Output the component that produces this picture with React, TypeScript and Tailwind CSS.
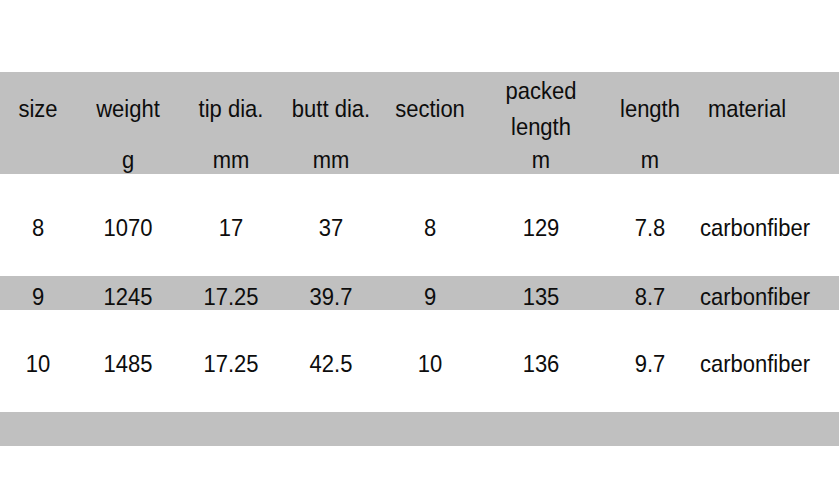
import React from 'react';

const cols = 'grid grid-cols-[76px_104px_102px_98px_100px_122px_96px_114px_1fr] *:scale-y-110';

const rows = [
  { size: '8', weight: '1070', tip: '17', butt: '37', section: '8', packed: '129', length: '7.8', material: 'carbonfiber', tall: true },
  { size: '9', weight: '1245', tip: '17.25', butt: '39.7', section: '9', packed: '135', length: '8.7', material: 'carbonfiber', tall: false },
  { size: '10', weight: '1485', tip: '17.25', butt: '42.5', section: '10', packed: '136', length: '9.7', material: 'carbonfiber', tall: true },
];

const SpecTable = () => {
  return (
    <div className="h-[486px] w-[839px] bg-white pt-[72px] text-[22px] text-[#0d0d0d] font-['Liberation_Sans',Arial,sans-serif]">
      {/* header */}
      <div className="bg-[#c0c0c0]">
        <div className={`${cols} h-[73px] items-center text-center leading-[33px]`}>
          <div>size</div>
          <div>weight</div>
          <div>tip dia.</div>
          <div>butt dia.</div>
          <div>section</div>
          <div>
            packed
            <br />
            length
          </div>
          <div>length</div>
          <div className="pr-4">material</div>
          <div />
        </div>
        <div className={`${cols} h-[29px] items-center text-center leading-[29px]`}>
          <div />
          <div>g</div>
          <div>mm</div>
          <div>mm</div>
          <div />
          <div>m</div>
          <div>m</div>
          <div />
          <div />
        </div>
      </div>

      {rows.map((r) => (
        <div
          key={r.size}
          className={`${cols} items-center pt-1 text-center ${r.tall ? 'h-[102px]' : 'h-[34px] bg-[#c0c0c0]'}`}
        >
          <div>{r.size}</div>
          <div>{r.weight}</div>
          <div>{r.tip}</div>
          <div>{r.butt}</div>
          <div>{r.section}</div>
          <div>{r.packed}</div>
          <div>{r.length}</div>
          <div>{r.material}</div>
          <div />
        </div>
      ))}

      <div className="h-[34px] bg-[#c0c0c0]" />
    </div>
  );
};

export default SpecTable;
